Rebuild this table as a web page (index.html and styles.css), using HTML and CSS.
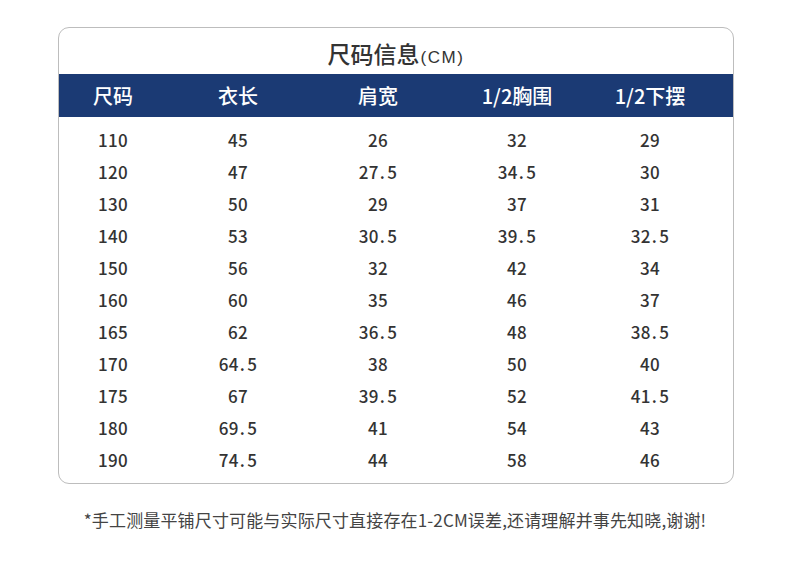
FILE: index.html
```html
<!DOCTYPE html>
<html lang="zh">
<head>
<meta charset="utf-8">
<link rel="stylesheet" href="styles.css">
</head>
<body>
<div class="card">
  <div class="title"><span>尺码信息<span class="unit">(CM)</span></span></div>
  <div class="row head">
    <div>尺码</div><div>衣长</div><div>肩宽</div><div>1/2胸围</div><div>1/2下摆</div>
  </div>
  <div class="body">
    <div class="row"><div>110</div><div>45</div><div>26</div><div>32</div><div>29</div></div>
    <div class="row"><div>120</div><div>47</div><div>27<span class="d">.</span>5</div><div>34<span class="d">.</span>5</div><div>30</div></div>
    <div class="row"><div>130</div><div>50</div><div>29</div><div>37</div><div>31</div></div>
    <div class="row"><div>140</div><div>53</div><div>30<span class="d">.</span>5</div><div>39<span class="d">.</span>5</div><div>32<span class="d">.</span>5</div></div>
    <div class="row"><div>150</div><div>56</div><div>32</div><div>42</div><div>34</div></div>
    <div class="row"><div>160</div><div>60</div><div>35</div><div>46</div><div>37</div></div>
    <div class="row"><div>165</div><div>62</div><div>36<span class="d">.</span>5</div><div>48</div><div>38<span class="d">.</span>5</div></div>
    <div class="row"><div>170</div><div>64<span class="d">.</span>5</div><div>38</div><div>50</div><div>40</div></div>
    <div class="row"><div>175</div><div>67</div><div>39<span class="d">.</span>5</div><div>52</div><div>41<span class="d">.</span>5</div></div>
    <div class="row"><div>180</div><div>69<span class="d">.</span>5</div><div>41</div><div>54</div><div>43</div></div>
    <div class="row"><div>190</div><div>74<span class="d">.</span>5</div><div>44</div><div>58</div><div>46</div></div>
  </div>
</div>
<p class="note">*手工测量平铺尺寸可能与实际尺寸直接存在1-2CM误差,还请理解并事先知晓,谢谢!</p>
</body>
</html>
```
FILE: styles.css
```css
* { box-sizing: border-box; }
html, body {
  margin: 0;
  padding: 0;
  background: #ffffff;
  font-family: "Noto Sans CJK SC", "Noto Sans", sans-serif;
  color: #333333;
}
.card {
  margin: 27px 0 0 58px;
  width: 676px;
  height: 457px;
  border: 1px solid #bdbdbd;
  border-radius: 11px;
  overflow: hidden;
  background: #ffffff;
}
.title {
  height: 46px;
  display: flex;
  align-items: center;
  justify-content: center;
  font-size: 23px;
  font-weight: 500;
  color: #333;
  padding-top: 3px;
}
.unit {
  font-family: "Liberation Sans", "Noto Sans", sans-serif;
  font-size: 17px;
  letter-spacing: 1.5px;
  margin-left: 1px;
  font-weight: 400;
}
.row {
  display: grid;
  grid-template-columns: 108px 142px 138px 140px 126px 1fr;
  height: 32px;
  align-items: center;
  font-size: 17px;
  font-weight: 500;
  color: #333;
}
.row > div {
  text-align: center;
  letter-spacing: 0.3px;
  padding-bottom: 2px;
}
.d {
  padding: 0 2px 0 1px;
}
.head {
  height: 43px;
  background: #1b3a74;
  color: #ffffff;
  font-size: 20px;
}
.head > div { letter-spacing: 0; padding-bottom: 0; }
.body {
  padding-top: 7px;
}
.note {
  margin: 24px 0 0 0;
  text-align: center;
  font-size: 17px;
  line-height: 24px;
  letter-spacing: 0.15px;
  color: #444;
}
```
